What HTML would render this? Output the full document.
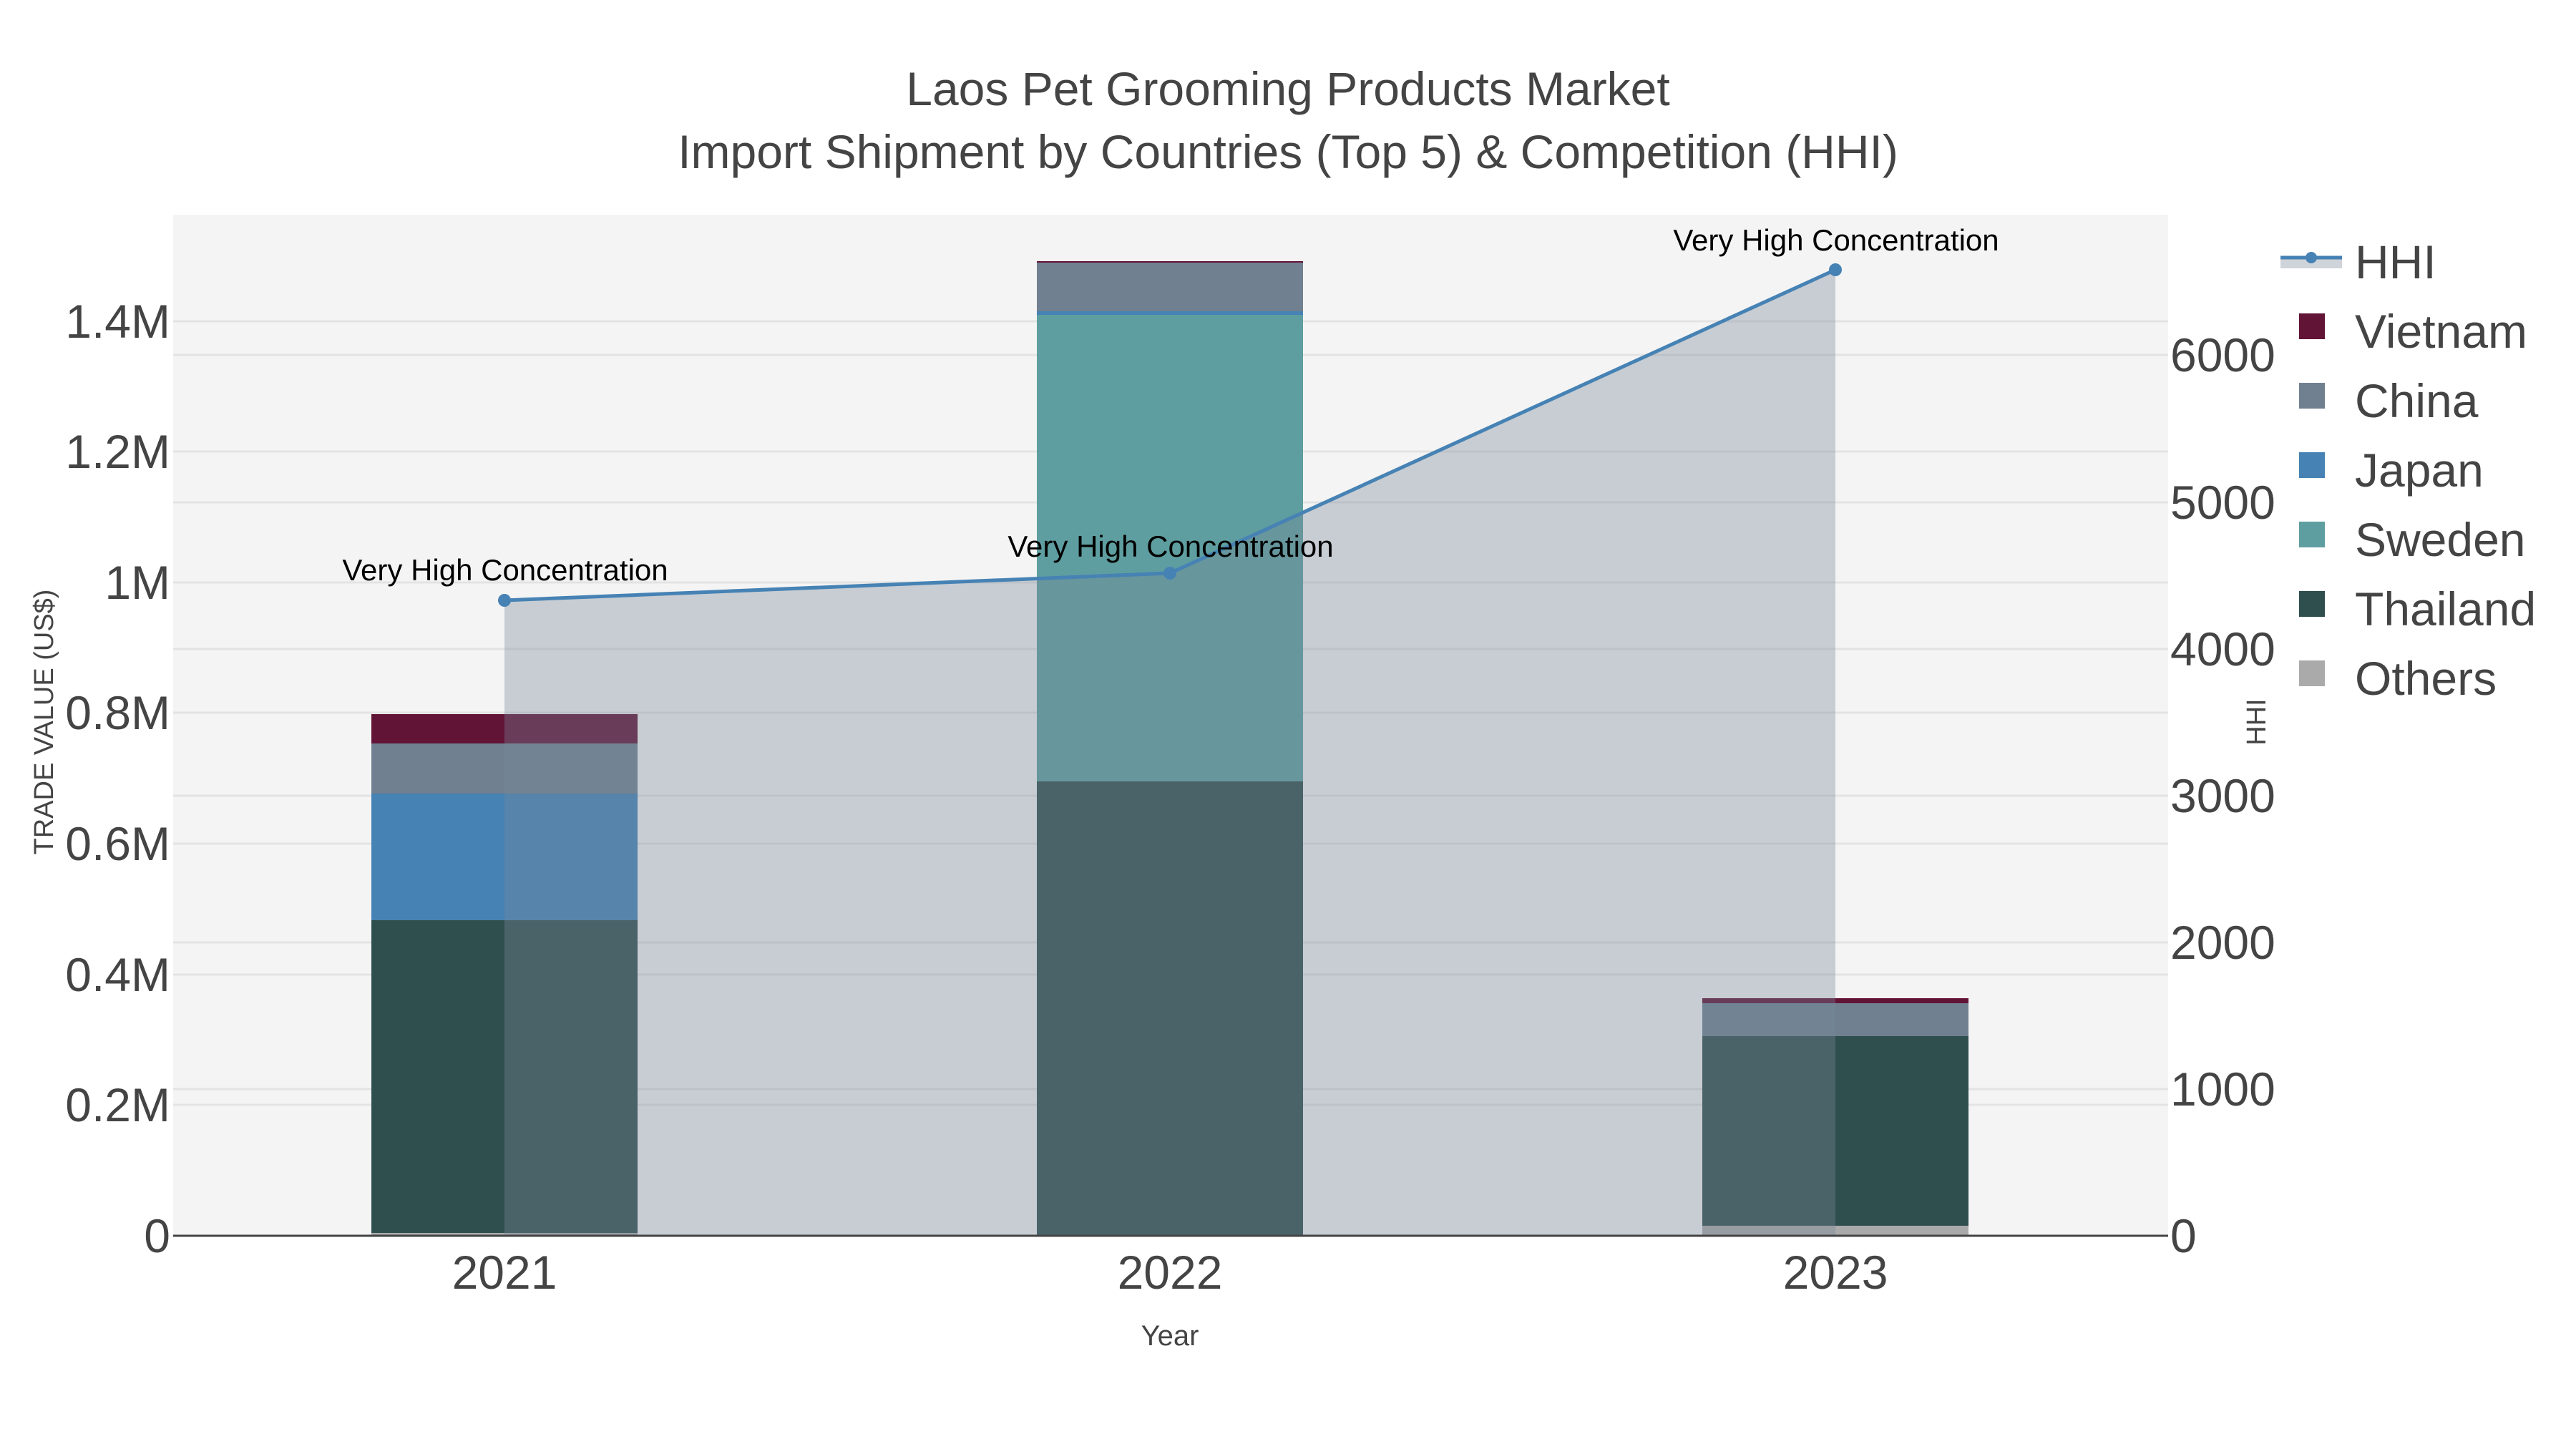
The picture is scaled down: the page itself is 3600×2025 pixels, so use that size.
<!DOCTYPE html>
<html><head><meta charset="utf-8"><style>
html,body{margin:0;padding:0;background:#fff}
svg{display:block}
text{font-family:"Liberation Sans",sans-serif}
</style></head><body>
<svg width="3600" height="2025" viewBox="0 0 3600 2025" xmlns="http://www.w3.org/2000/svg">
<rect width="3600" height="2025" fill="#fff"/>
<text x="1800" y="147" font-size="66" fill="#444" text-anchor="middle">Laos Pet Grooming Products Market</text>
<text x="1800" y="235" font-size="66" fill="#444" text-anchor="middle">Import Shipment by Countries (Top 5) &amp; Competition (HHI)</text>
<g transform="translate(0,-6)">
<rect x="242" y="306" width="2788" height="1427" fill="#f4f4f4"/>
<g stroke="#e3e3e3" stroke-width="3">
<line x1="242" x2="3030" y1="1550" y2="1550"/><line x1="242" x2="3030" y1="1368" y2="1368"/>
<line x1="242" x2="3030" y1="1185" y2="1185"/><line x1="242" x2="3030" y1="1002" y2="1002"/>
<line x1="242" x2="3030" y1="820" y2="820"/><line x1="242" x2="3030" y1="637" y2="637"/>
<line x1="242" x2="3030" y1="455" y2="455"/>
<line x1="242" x2="3030" y1="1528" y2="1528"/><line x1="242" x2="3030" y1="1323" y2="1323"/>
<line x1="242" x2="3030" y1="1118" y2="1118"/><line x1="242" x2="3030" y1="913" y2="913"/>
<line x1="242" x2="3030" y1="708" y2="708"/><line x1="242" x2="3030" y1="502" y2="502"/>
</g>
<!-- 2021 -->
<rect x="519" y="1729" width="372" height="4" fill="#aaa"/>
<rect x="519" y="1292" width="372" height="437" fill="#2f4f4f"/>
<rect x="519" y="1115" width="372" height="177" fill="#4682b4"/>
<rect x="519" y="1045" width="372" height="70" fill="#708090"/>
<rect x="519" y="1004" width="372" height="41" fill="#621436"/>
<!-- 2022 -->
<rect x="1449" y="1098" width="372" height="635" fill="#2f4f4f"/>
<rect x="1449" y="445" width="372" height="653" fill="#5f9ea0"/>
<rect x="1449" y="441" width="372" height="5" fill="#4682b4"/>
<rect x="1449" y="373" width="372" height="68" fill="#708090"/>
<rect x="1449" y="371" width="372" height="2" fill="#621436"/>
<!-- 2023 -->
<rect x="2379" y="1719" width="372" height="14" fill="#aaa"/>
<rect x="2379" y="1454" width="372" height="265" fill="#2f4f4f"/>
<rect x="2379" y="1408" width="372" height="46" fill="#708090"/>
<rect x="2379" y="1401" width="372" height="7" fill="#621436"/>
<!-- HHI area -->
<polygon points="705,1733 705,845 1635,807 2565,383 2565,1733" fill="rgb(119,136,153)" fill-opacity="0.36"/>
<polyline points="705,845 1635,807 2565,383" fill="none" stroke="#4682b4" stroke-width="5"/>
<circle cx="705" cy="845" r="9" fill="#4682b4"/><circle cx="1635" cy="807" r="9" fill="#4682b4"/><circle cx="2565" cy="383" r="9" fill="#4682b4"/>
<line x1="242" x2="3030" y1="1733" y2="1733" stroke="#444" stroke-width="3"/>
<g font-size="42" fill="#000" text-anchor="middle">
<text x="706" y="817">Very High Concentration</text>
<text x="1636" y="784">Very High Concentration</text>
<text x="2566" y="356">Very High Concentration</text>
</g>
<g font-size="66" fill="#444" text-anchor="end">
<text x="238" y="1756">0</text><text x="238" y="1573">0.2M</text><text x="238" y="1391">0.4M</text>
<text x="238" y="1208">0.6M</text><text x="238" y="1025">0.8M</text><text x="238" y="843">1M</text>
<text x="238" y="660">1.2M</text><text x="238" y="478">1.4M</text>
</g>
<defs><clipPath id="c"><rect x="3030" y="0" width="150" height="2025"/></clipPath></defs>
<g font-size="66" fill="#444" clip-path="url(#c)">
<text x="3033" y="1756">0</text><text x="3033" y="1551">1000</text><text x="3033" y="1346">2000</text>
<text x="3033" y="1141">3000</text><text x="3033" y="936">4000</text><text x="3033" y="731">5000</text><text x="3033" y="525">6000</text>
</g>
<g font-size="66" fill="#444" text-anchor="middle">
<text x="705" y="1807">2021</text><text x="1635" y="1807">2022</text><text x="2565" y="1807">2023</text>
</g>
<text x="1635" y="1886" font-size="40" fill="#444" text-anchor="middle">Year</text>
<text transform="translate(74,1015) rotate(-90)" font-size="38" fill="#444" text-anchor="middle">TRADE VALUE (US$)</text>
<text transform="translate(3166,1015) rotate(-90)" font-size="38" fill="#444" text-anchor="middle">HHI</text>
</g>
<!-- legend -->
<g transform="translate(-16,-3)">
<rect x="3203" y="362" width="86" height="16" fill="#cfd3da"/>
<line x1="3203" x2="3289" y1="363" y2="363" stroke="#4682b4" stroke-width="5"/>
<circle cx="3246" cy="363" r="8" fill="#4682b4"/>
<g font-size="66" fill="#444">
<text x="3307" y="392">HHI</text>
<text x="3307" y="489">Vietnam</text>
<text x="3307" y="586">China</text>
<text x="3307" y="683">Japan</text>
<text x="3307" y="780">Sweden</text>
<text x="3307" y="877">Thailand</text>
<text x="3307" y="974">Others</text>
</g>
<rect x="3229" y="441" width="36" height="36" fill="#621436"/>
<rect x="3229" y="538" width="36" height="36" fill="#708090"/>
<rect x="3229" y="635" width="36" height="36" fill="#4682b4"/>
<rect x="3229" y="732" width="36" height="36" fill="#5f9ea0"/>
<rect x="3229" y="829" width="36" height="36" fill="#2f4f4f"/>
<rect x="3229" y="926" width="36" height="36" fill="#aaa"/>
</g>
</svg>
</body></html>
